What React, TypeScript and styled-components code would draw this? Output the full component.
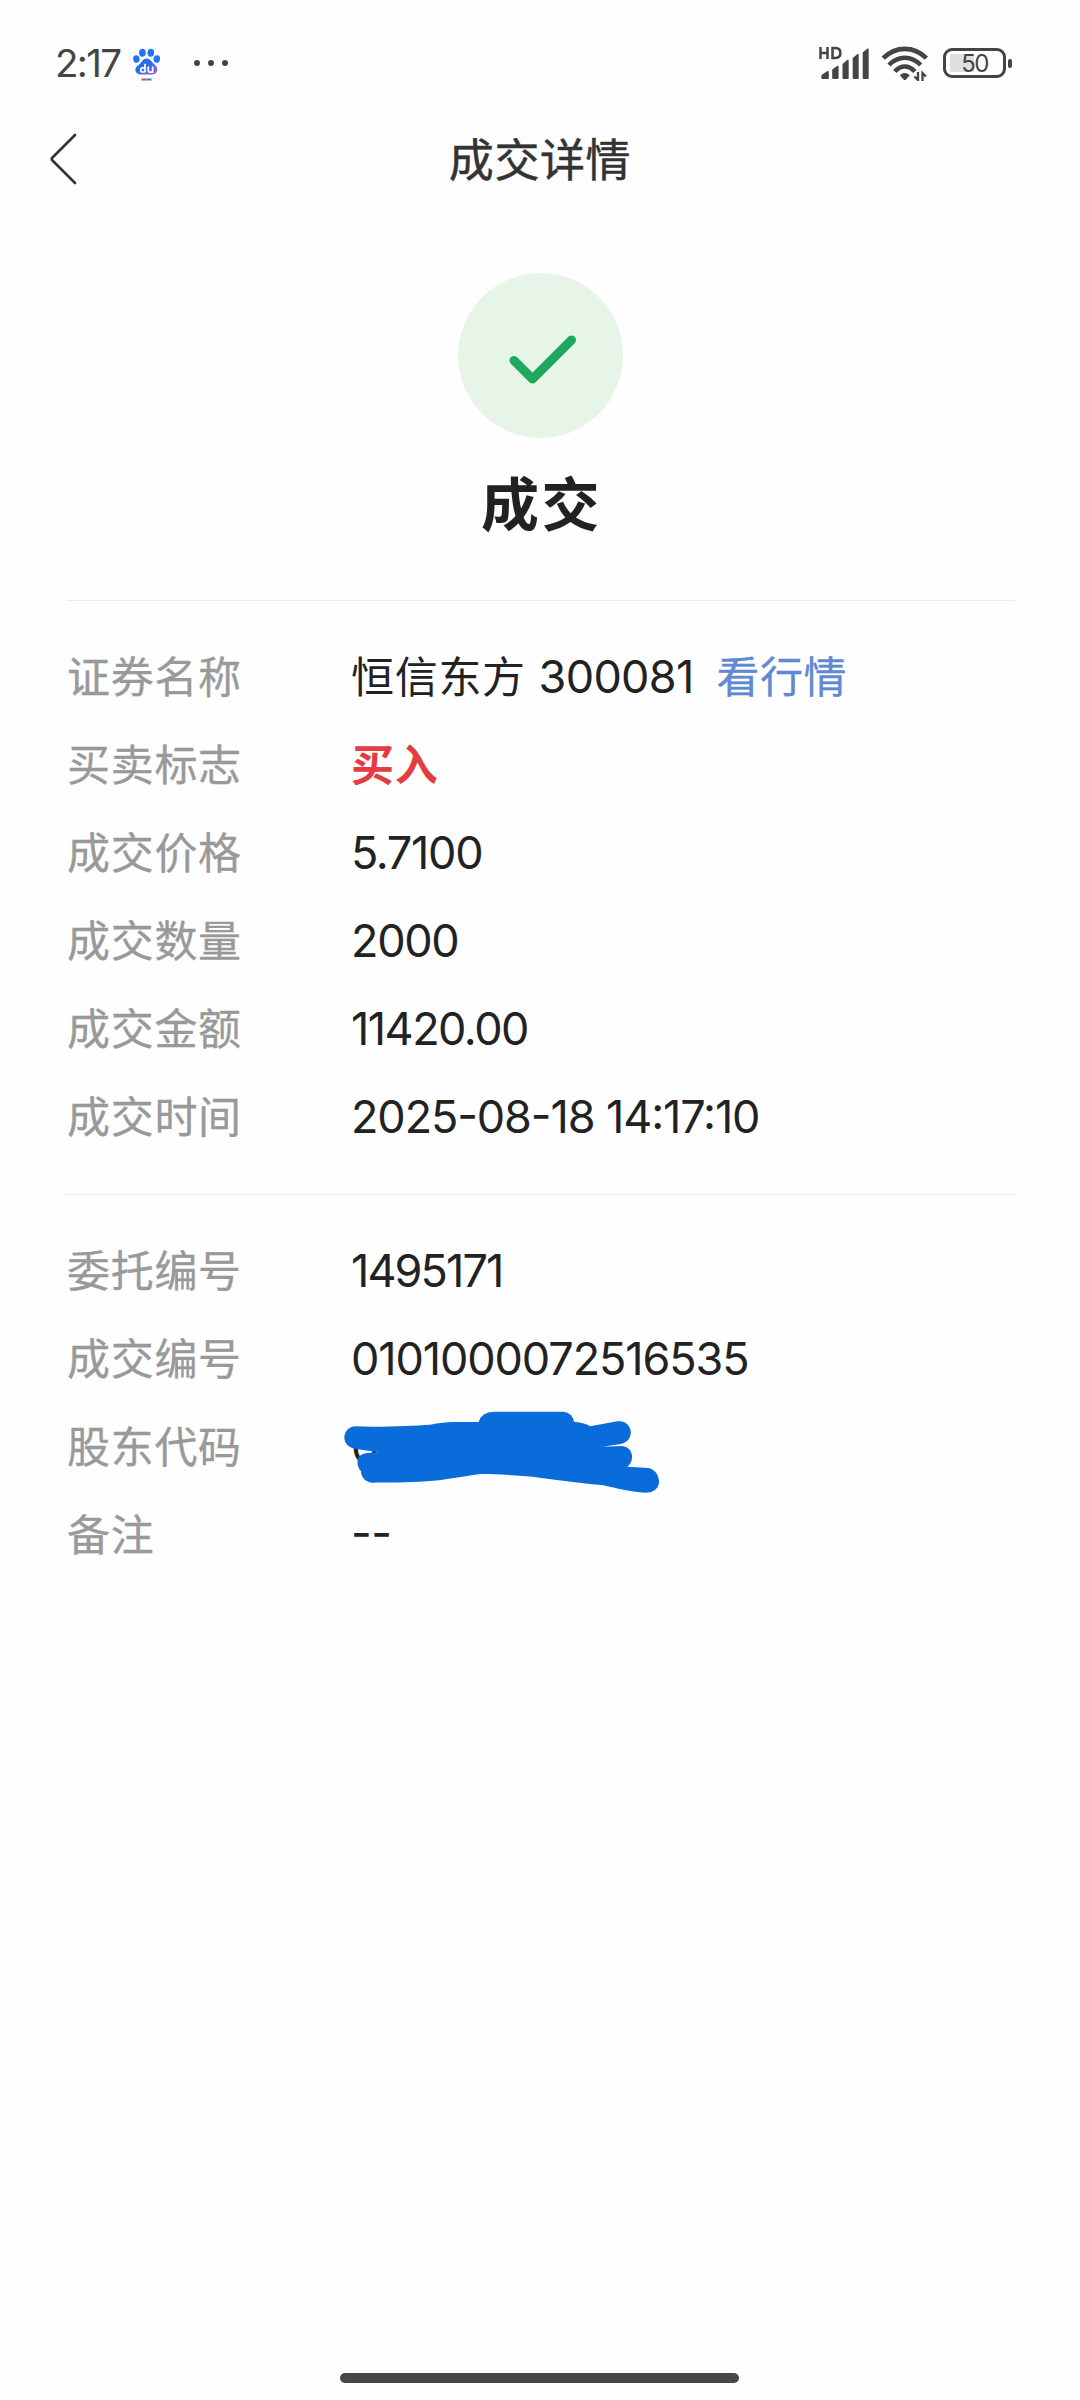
import React from 'react';
import styled, { createGlobalStyle } from 'styled-components';

const GlobalStyle = createGlobalStyle`
  * { box-sizing: border-box; }
  body {
    margin: 0;
    background: #fefefe;
    font-family: Inter, "Noto Sans CJK SC", sans-serif;
  }
`;

const Screen = styled.div`
  width: 1080px;
  height: 2400px;
  display: flex;
  flex-direction: column;
  background: #fefefe;
  overflow: hidden;
`;

const StatusBar = styled.div`
  height: 110px;
  padding: 16px 68px 0 55px;
  display: flex;
  align-items: center;
  justify-content: space-between;
`;

const StatusGroup = styled.div`
  display: flex;
  align-items: center;
`;

const Clock = styled.span`
  width: 74px;
  font-size: 38.5px;
  line-height: 46px;
  letter-spacing: -1.700px;
  color: #444;
  white-space: nowrap;
`;

const Header = styled.header`
  height: 98px;
  padding: 0 50px;
  display: grid;
  grid-template-columns: 60px 1fr 60px;
  align-items: center;
`;

const BackButton = styled.button`
  width: 28px;
  height: 52px;
  padding: 0;
  border: 0;
  background: none;
  display: flex;
`;

const Title = styled.h1`
  margin: 0;
  padding-top: 4px;
  text-align: center;
  font-size: 45px;
  line-height: 60px;
  letter-spacing: 0.6px;
  font-weight: 400;
  color: #333;
  -webkit-text-stroke: 0.5px currentColor;
`;

const Result = styled.section`
  height: 392px;
  padding-top: 65px;
  display: flex;
  flex-direction: column;
  align-items: center;
`;

const ResultBadge = styled.div`
  width: 165px;
  height: 165px;
  border-radius: 50%;
  background: #e7f5e9;
`;

const ResultText = styled.h2`
  margin: 25px 0 0;
  padding-left: 3px;
  font-size: 58px;
  line-height: 84px;
  letter-spacing: 2.5px;
  font-weight: 700;
  color: #222;
`;

const Details = styled.section`
  margin: 0 65px 0 66px;
  padding: 32px 0 33px;
  border-top: 1px solid #ebebeb;
`;

const Row = styled.div`
  height: 88px;
  display: grid;
  grid-template-columns: 285px 1fr;
  align-items: center;
  font-size: 43px;
  line-height: 64px;
`;

const Label = styled.span`
  padding-left: 1px;
  color: #999;
  letter-spacing: 0.7px;
  -webkit-text-stroke: 0.3px currentColor;
`;

const Value = styled.span<{ $tone?: 'buy'; $tracking?: number }>`
  position: relative;
  white-space: pre;
  color: ${p => (p.$tone === 'buy' ? '#e43c42' : '#222')};
  font-weight: ${p => (p.$tone === 'buy' ? 700 : 400)};
  font-size: ${p => (p.$tracking === undefined ? 43 : 45)}px;
  letter-spacing: ${p => p.$tracking ?? 0.7}px;
  font-feature-settings: "case";
`;

const StockCode = styled.span`
  font-size: 45px;
  letter-spacing: -0.7px;
`;

const QuoteLink = styled.a`
  margin-left: 23px;
  color: #6189d2;
  letter-spacing: 0.5px;
  -webkit-text-stroke: 0.3px currentColor;
`;

const Redaction = styled.svg`
  position: absolute;
  left: -31px;
  top: -25px;
`;

const Footer = styled.footer`
  margin-top: auto;
  height: 27px;
  padding-right: 1px;
  display: flex;
  justify-content: center;
`;

const HomeIndicator = styled.div`
  width: 399px;
  height: 10px;
  border-radius: 5px;
  background: #474747;
`;

const PawIcon = () => (
  <svg width="36" height="36" viewBox="0 0 36 36">
    <defs>
      <linearGradient id="paw" x1="0" y1="0" x2="1" y2="1">
        <stop offset="0.45" stopColor="#2470ee" />
        <stop offset="1" stopColor="#b65bd0" />
      </linearGradient>
    </defs>
    <g fill="#2374f0">
      <ellipse cx="7.400" cy="14" rx="3.200" ry="3.800" transform="rotate(-12 7.400 14)" />
      <ellipse cx="13.400" cy="7.800" rx="3.300" ry="4" />
      <ellipse cx="21.800" cy="7.800" rx="3.300" ry="4" transform="rotate(8 21.800 7.800)" />
      <ellipse cx="27.800" cy="14" rx="3.200" ry="3.800" transform="rotate(12 27.800 14)" />
    </g>
    <path d="M17.5 13.500c3.500 0 4.800 3 7.200 5.200 2.800 2.500 4 4 3.500 6.800-.6 2.700-2.500 4-5 4H12c-3 0-5.500-1.800-5.700-4.500-.1-2.500 2-4 4.300-6 2.200-2 3.400-5.500 6.900-5.500z" fill="url(#paw)" />
    <g fill="none" stroke="#fff" strokeWidth="1.700">
      <path d="M16 18.800v8.500M16 22.800h-2.200a2.100 2.100 0 0 0 0 4.200H16M19.200 21.500v3.800q0 1.800 1.800 1.800h2.700v-5.600" />
    </g>
    <path d="M12.500 34.500h5" stroke="#c94f5c" strokeWidth="2" />
    <path d="M17.500 34.500h5" stroke="#3d7fc0" strokeWidth="2" />
  </svg>
);

const MoreDots = styled.div`
  display: flex;
  gap: 8px;
  margin-left: 29px;
`;

const Dot = styled.i`
  width: 6px;
  height: 6px;
  border-radius: 50%;
  background: #444;
`;

const SignalIcon = () => (
  <svg width="52" height="36" viewBox="817 45 52 36">
    <path
      d="M820.500 47v12M827.500 47v12M820.500 53h7M832.500 48.100v9.800h3q4.900 0 4.900-4.900t-4.900-4.900z"
      fill="none" stroke="#444" strokeWidth="2.500"
    />
    <g fill="#444">
      <path d="M821.500 75l6-4q1.300-.5 1.300 1v6q0 1-1 1h-5.500q-1 0-1-1z" />
      <path d="M832.200 69.500l5.200-3.700q1.200-.4 1.200 1V78q0 1-1 1h-4.400q-1 0-1-1z" />
      <path d="M842.500 64l5-4.200q1.200-.4 1.200 1V78q0 1-1 1h-4.200q-1 0-1-1z" />
      <path d="M852.700 58l4.800-4q1.200-.4 1.200 1v23q0 1-1 1h-4q-1 0-1-1z" />
      <path d="M862.700 52.500l4.800-4q1.200-.4 1.200 1V78q0 1-1 1h-4q-1 0-1-1z" />
    </g>
  </svg>
);

const WifiIcon = () => (
  <svg width="48" height="36" viewBox="881 45 48 36">
    <g fill="none" stroke="#444" strokeWidth="4.600">
      <path d="M883.200 58.200q9.500-9.300 21.600-9.300t21.600 9.300" />
      <path d="M889 65q7-7.200 15.800-7.200T920.600 65" />
      <path d="M894.800 71.500q4.500-5 10-5t10 5" />
    </g>
    <path d="M899.800 75.200q5-4.500 10 0l-3.800 4.300q-1.200 1-2.400 0z" fill="#444" />
    <g fill="none" stroke="#444" strokeWidth="2.300">
      <path d="M918 72v8l-3.500-3.500M922.500 81v-8l3.500 3.500" />
    </g>
  </svg>
);

const StatusIcons = styled(StatusGroup)`
  gap: 12px;
`;

const Battery = styled.div`
  display: flex;
  align-items: center;
  gap: 2px;
  margin-left: 2px;
`;

const BatteryBody = styled.div`
  width: 63px;
  height: 30px;
  border: 3px solid #444;
  border-radius: 9px;
  display: flex;
  align-items: center;
  justify-content: center;
  background: linear-gradient(#dfdfdf, #dfdfdf) 4px 3px / 24px 18px no-repeat;
  color: #444;
  font-size: 24px;
  line-height: 24px;
  padding-top: 1px;
  letter-spacing: -1.500px;
`;

const BatteryTip = styled.div`
  width: 4px;
  height: 9px;
  border-radius: 2px;
  background: #444;
`;

type Field = {
  label: string;
  value: string;
  code?: string;
  tracking?: number;
  tone?: 'buy';
  link?: string;
  hidden?: boolean;
};

const trade: Field[] = [
  { label: '证券名称', value: '恒信东方 ', code: '300081', link: '看行情' },
  { label: '买卖标志', value: '买入', tone: 'buy' },
  { label: '成交价格', value: '5.7100', tracking: -1.3 },
  { label: '成交数量', value: '2000', tracking: -1.3 },
  { label: '成交金额', value: '11420.00', tracking: -1.5 },
  { label: '成交时间', value: '2025-08-18 14:17:10', tracking: -1.1 },
];

const order: Field[] = [
  { label: '委托编号', value: '1495171', tracking: -1.9 },
  { label: '成交编号', value: '0101000072516535', tracking: -1.1 },
  { label: '股东代码', value: '0', tracking: 0, hidden: true },
  { label: '备注', value: '--', tracking: -0.5 },
];

const Fields = ({ items }: { items: Field[] }) => (
  <Details>
    {items.map(f => (
      <Row key={f.label}>
        <Label>{f.label}</Label>
        <Value $tone={f.tone} $tracking={f.tracking}>
          {f.value}
          {f.code && <StockCode>{f.code}</StockCode>}
          {f.link && <QuoteLink>{f.link}</QuoteLink>}
          {f.hidden && (
            <Redaction width="360" height="120" viewBox="0 0 1080 360">
              <path
                fill="#0a6cda"
                d="M106 109C180 112 280 107 330 104Q370 96 400 96L476 96Q484 66 522 65L730 65Q757 68 762 95Q796 98 811 109L892 94C922 90 935 115 932 132C929 150 918 158 902 162L848 170L905 168C930 170 938 190 936 205Q934 221 922 230L985 234C1008 238 1018 260 1017 278C1014 298 999 308 975 308C930 306 890 295 850 286C760 278 680 264 610 258C560 254 520 252 482 252C420 260 370 271 320 274C260 278 200 278 155 278C132 275 123 258 123 244C112 232 110 213 115 203Q124 190 142 189L174 187L105 176C82 172 73 158 73 142C74 124 87 110 106 109Z"
              />
            </Redaction>
          )}
        </Value>
      </Row>
    ))}
  </Details>
);

export default function App() {
  return (
    <>
      <GlobalStyle />
      <Screen>
        <StatusBar>
          <StatusGroup>
            <Clock>2:17</Clock>
            <PawIcon />
            <MoreDots><Dot /><Dot /><Dot /></MoreDots>
          </StatusGroup>
          <StatusIcons>
            <SignalIcon />
            <WifiIcon />
            <Battery>
              <BatteryBody>50</BatteryBody>
              <BatteryTip />
            </Battery>
          </StatusIcons>
        </StatusBar>
        <Header>
          <BackButton aria-label="返回">
            <svg width="28" height="52" viewBox="0 0 28 52" fill="none" stroke="#333" strokeWidth="2.600" strokeLinecap="round" strokeLinejoin="round">
              <path d="M25 2L2.500 24.500Q1 26 2.500 27.500L25 50" />
            </svg>
          </BackButton>
          <Title>成交详情</Title>
        </Header>
        <Result>
          <ResultBadge>
            <svg width="165" height="165" viewBox="0 0 165 165" fill="none" stroke="#1fa95d" strokeWidth="9" strokeLinecap="round" strokeLinejoin="round">
              <path d="M56 87.500L74.500 106L113.500 67" />
            </svg>
          </ResultBadge>
          <ResultText>成交</ResultText>
        </Result>
        <Fields items={trade} />
        <Fields items={order} />
        <Footer><HomeIndicator /></Footer>
      </Screen>
    </>
  );
}
